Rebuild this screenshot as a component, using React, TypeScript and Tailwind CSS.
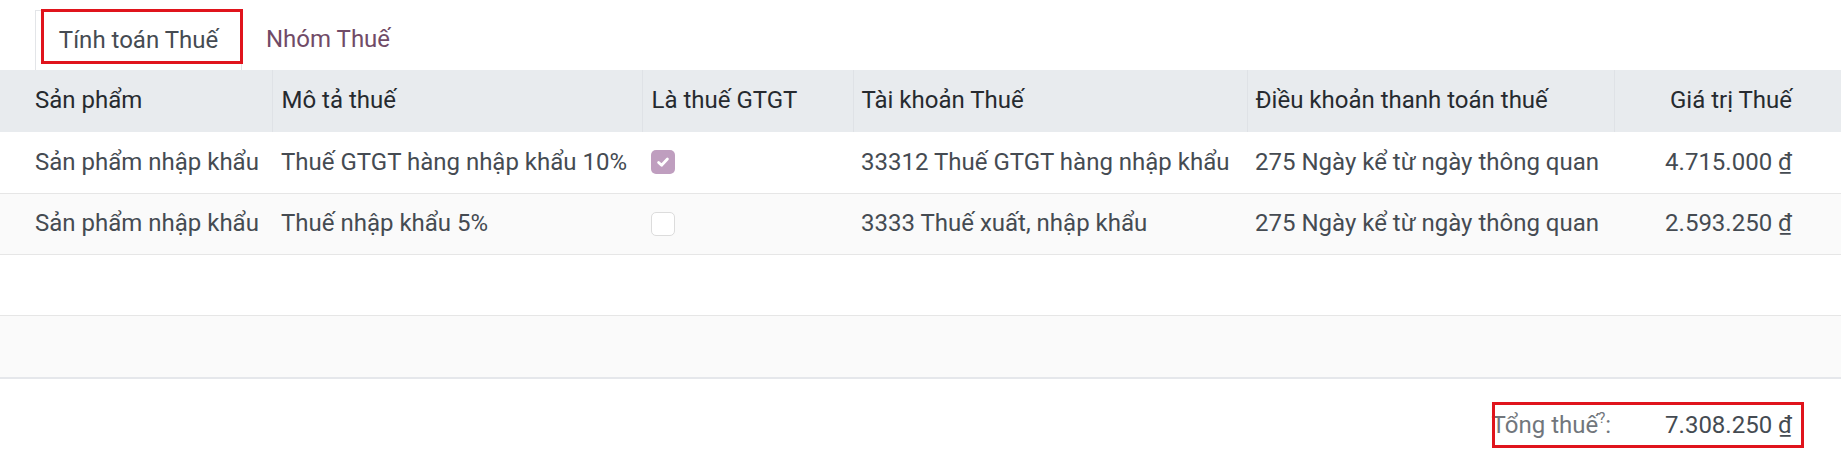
import React from "react";

const cols = [272, 370, 211, 394, 367, 227];

type Row = {
  product: string;
  desc: string;
  vat: boolean;
  account: string;
  term: string;
  amount: string;
};

const rows: Row[] = [
  {
    product: "Sản phẩm nhập khẩu",
    desc: "Thuế GTGT hàng nhập khẩu 10%",
    vat: true,
    account: "33312 Thuế GTGT hàng nhập khẩu",
    term: "275 Ngày kể từ ngày thông quan",
    amount: "4.715.000",
  },
  {
    product: "Sản phẩm nhập khẩu",
    desc: "Thuế nhập khẩu 5%",
    vat: false,
    account: "3333 Thuế xuất, nhập khẩu",
    term: "275 Ngày kể từ ngày thông quan",
    amount: "2.593.250",
  },
];

function CheckBox({ checked }: { checked: boolean }) {
  if (checked) {
    return (
      <div className="w-[24px] h-[24px] rounded-[5px] bg-[#bf9ebf] flex items-center justify-center">
        <svg width="16" height="16" viewBox="0 0 16 16" fill="none">
          <path d="M3.6 8.4 L6.6 11.2 L12.4 5" stroke="white" strokeWidth="2.8" strokeLinecap="round" strokeLinejoin="round" />
        </svg>
      </div>
    );
  }
  return <div className="w-[24px] h-[24px] rounded-[5px] border border-[#dcdcdc] bg-white" />;
}

export default function App() {
  return (
    <div
      className="relative w-full h-[463px] bg-white text-[24px] leading-[1.3] text-[#454b52] overflow-hidden"
      style={{ fontFamily: "Roboto, 'Noto Sans', sans-serif" }}
    >
      {/* Tabs */}
      <div className="flex pl-[35px] pt-[10px] h-[70px]">
        <div className="h-[60px] w-[207px] border border-b-0 border-[#e3e5e8] flex items-center justify-center text-[#454b52] bg-white">
          Tính toán Thuế
        </div>
        <div className="h-[60px] px-[24px] flex items-center text-[#714b67]">Nhóm Thuế</div>
      </div>

      {/* Table */}
      <table className="w-full table-fixed border-collapse">
        <colgroup>
          {cols.map((w, i) => (
            <col key={i} style={{ width: i === cols.length - 1 ? undefined : w }} />
          ))}
        </colgroup>
        <thead>
          <tr className="h-[62px] bg-[#e8ebee] text-[#262a2f]">
            <th className="font-normal text-left pl-[35px] border-r border-[#dfe2e6]">Sản phẩm</th>
            <th className="font-normal text-left pl-[9px] border-r border-[#dfe2e6]">Mô tả thuế</th>
            <th className="font-normal text-left pl-[9px] border-r border-[#dfe2e6]">Là thuế GTGT</th>
            <th className="font-normal text-left pl-[8px] border-r border-[#dfe2e6]">Tài khoản Thuế</th>
            <th className="font-normal text-left pl-[8px] border-r border-[#dfe2e6]">Điều khoản thanh toán thuế</th>
            <th className="font-normal text-right pr-[49px]">Giá trị Thuế</th>
          </tr>
        </thead>
        <tbody>
          {rows.map((r, i) => (
            <tr key={i} className={`h-[61px] border-b border-[#e6e6e6] ${i % 2 === 1 ? "bg-[#fafafa]" : "bg-white"}`}>
              <td className="pl-[35px] whitespace-nowrap overflow-hidden">{r.product}</td>
              <td className="pl-[9px] whitespace-nowrap overflow-hidden">{r.desc}</td>
              <td className="pl-[9px]">
                <CheckBox checked={r.vat} />
              </td>
              <td className="pl-[8px] whitespace-nowrap overflow-hidden">{r.account}</td>
              <td className="pl-[8px] whitespace-nowrap overflow-hidden">{r.term}</td>
              <td className="pr-[49px] text-right whitespace-nowrap">
                {r.amount} <span className="underline">₫</span>
              </td>
            </tr>
          ))}
          <tr className="h-[61px] border-b border-[#e6e6e6] bg-white">
            <td colSpan={6}></td>
          </tr>
          <tr className="h-[63px] border-b-2 border-[#e5e7eb] bg-[#fafafa]">
            <td colSpan={6}></td>
          </tr>
        </tbody>
      </table>

      {/* Totals */}
      <div className="flex justify-end pr-[49px] pt-[25px]">
        <div className="flex items-center h-[44px]">
          <span className="text-[#71767c]">
            Tổng thuế<sup className="text-[15px] -top-[0.7em]">?</sup>:
          </span>
          <span className="ml-[54px] text-[#454b52]">
            7.308.250 <span className="underline">₫</span>
          </span>
        </div>
      </div>

      {/* Annotation boxes */}
      <div className="absolute left-[41px] top-[9px] w-[202px] h-[55px] border-[3px] border-[#e0141c] pointer-events-none" />
      <div className="absolute left-[1492px] top-[402px] w-[312px] h-[46px] border-[3px] border-[#e0141c] pointer-events-none" />
    </div>
  );
}
